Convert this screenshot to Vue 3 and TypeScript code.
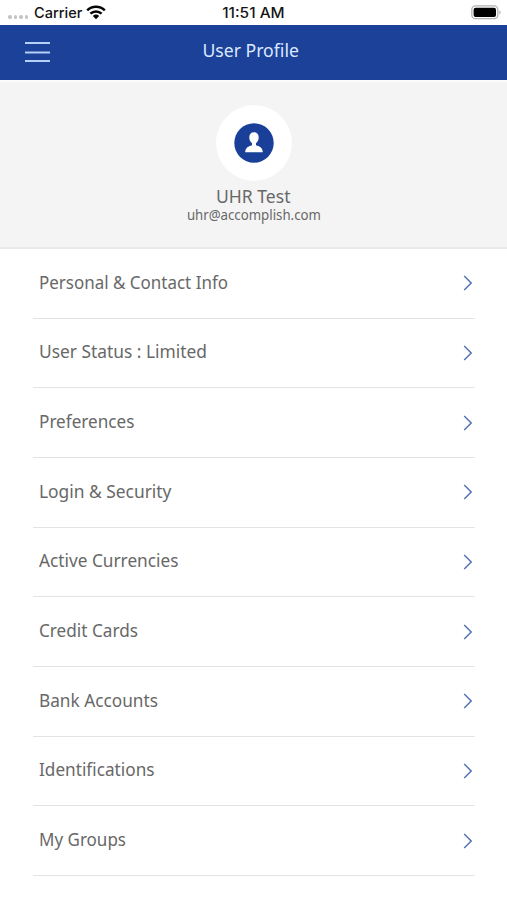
<script setup lang="ts">
import { nextTick, onMounted, ref } from 'vue'

interface MenuItem {
  label: string
  width: number
}

const items: MenuItem[] = [
  { label: 'Personal & Contact Info', width: 189 },
  { label: 'User Status : Limited', width: 168 },
  { label: 'Preferences', width: 95.5 },
  { label: 'Login & Security', width: 132.5 },
  { label: 'Active Currencies', width: 139.5 },
  { label: 'Credit Cards', width: 99 },
  { label: 'Bank Accounts', width: 119 },
  { label: 'Identifications', width: 115.5 },
  { label: 'My Groups', width: 87 },
]

const page = ref<HTMLElement | null>(null)

// Condense each label horizontally to its designed width.
function fitLabels(): void {
  page.value?.querySelectorAll<HTMLElement>('[data-fit]').forEach((el) => {
    const target = Number(el.dataset.fit)
    el.style.transform = `scaleX(${target / el.getBoundingClientRect().width})`
  })
}

onMounted(async () => {
  await nextTick()
  fitLabels()
})
</script>

<template>
  <main ref="page" class="page">
    <div class="status">
      <div class="carrier">
        <span class="dots"><i v-for="n in 4" :key="n"></i></span>
        <span class="fit left" data-fit="48.5">Carrier</span>
        <svg class="wifi" width="20" height="15" viewBox="0 0 20 15">
          <g fill="none" stroke="#050505" stroke-width="2.5">
            <path d="M1.2 5.3C6 .6 14 .6 18.8 5.3" />
            <path d="M4.4 8.7C7.6 5.6 12.4 5.6 15.6 8.7" />
          </g>
          <path fill="#050505" d="M6.8 10.9Q10 8.3 13.2 10.9L10 14.2Z" />
        </svg>
      </div>
      <div class="clock"><span class="fit" data-fit="62.5">11:51 AM</span></div>
      <svg class="battery" width="31" height="15" viewBox="0 0 31 15">
        <rect x=".8" y=".9" width="26" height="12.8" rx="3.6" fill="#fff" stroke="#b3b3b3" stroke-width="1.3" />
        <rect x="2.6" y="2.7" width="22.4" height="9.2" rx="2" fill="#000" />
        <path d="M28.5 5.2Q30.7 7.3 28.5 9.4Z" fill="#999" />
      </svg>
    </div>
    <header class="bar">
      <svg class="burger" width="25" height="22" viewBox="0 0 25 22" stroke="#b4d0f6" stroke-width="2">
        <path d="M0 2H25M0 11.4H25M0 20H25" />
      </svg>
      <h1><span class="fit" data-fit="96.5">User Profile</span></h1>
    </header>
    <section class="profile">
      <div class="avatar">
        <svg width="40" height="40" viewBox="0 0 40 40">
          <circle cx="20" cy="20" r="19.7" fill="#193f99" />
          <path fill="#fff" d="M20 9.2C17 9.2 15.3 11.2 15.3 14.3C15.3 17 16.3 19 18 20.2V22.2C14.5 23.3 11.5 24.2 11.2 29.3H28.8C28.5 24.2 25.5 23.3 22 22.2V20.2C23.7 19 24.7 17 24.7 14.3C24.7 11.2 23 9.2 20 9.2Z" />
        </svg>
      </div>
      <div class="name"><span class="fit" data-fit="74.5">UHR Test</span></div>
      <div class="email"><span class="fit" data-fit="134">uhr@accomplish.com</span></div>
    </section>
    <ul class="menu">
      <li v-for="item in items" :key="item.label">
        <span class="fit left" :data-fit="item.width">{{ item.label }}</span>
        <svg width="10" height="16" viewBox="0 0 10 16" fill="none" stroke="#5272b6" stroke-width="1.5">
          <path d="M1.2 1L8.2 8L1.2 15" />
        </svg>
      </li>
    </ul>
  </main>
</template>

<style>
body {
  background: #fff;
}
</style>

<style scoped>
.page {
  height: 900px;
  overflow: hidden;
  background: #fff;
  color: #686868;
  font-family: 'Noto Sans', 'Open Sans', sans-serif;
}
.fit {
  display: inline-block;
  white-space: nowrap;
  transform-origin: center;
}
.left {
  transform-origin: left center;
}
.status {
  height: 25.4px;
  box-sizing: border-box;
  display: grid;
  grid-template-columns: 1fr auto 1fr;
  align-items: center;
  padding: 0 6px 0 8px;
  color: #151515;
  font: 500 14px/25px Inter, sans-serif;
}
.carrier {
  display: flex;
  align-items: center;
}
.dots {
  display: flex;
  gap: 2px;
  width: 26px;
  padding-top: 9px;
}
.dots i {
  width: 3.5px;
  height: 3.5px;
  border-radius: 50%;
  background: #c4c4c4;
}
.wifi {
  margin-left: 5px;
}
.clock {
  margin-right: 2px;
  text-align: center;
}
.battery {
  justify-self: end;
  margin-right: -1px;
}
.bar {
  height: 55px;
  box-sizing: border-box;
  display: grid;
  grid-template-columns: 1fr auto 1fr;
  align-items: center;
  padding: 0 30px 2px 25px;
  background: #1b4198;
  color: #dce8ff;
}
.bar h1 {
  margin: 0;
  padding-bottom: 3.5px;
  font-size: 18.5px;
  font-weight: 400;
  line-height: 26px;
}
.profile {
  height: 168.6px;
  box-sizing: border-box;
  display: flex;
  flex-direction: column;
  align-items: center;
  padding-top: 22.6px;
  background: #f4f4f4;
  border-top: 2px solid #fbfbfb;
  border-bottom: 2px solid #e9e9e9;
}
.avatar {
  width: 76px;
  height: 76px;
  display: grid;
  place-items: center;
  border-radius: 50%;
  background: #fff;
}
.name {
  margin-top: 5px;
  font-size: 18.5px;
  line-height: 20px;
}
.email {
  font-size: 14px;
  line-height: 18px;
}
.menu {
  margin: 0 32px 0 33px;
  padding: 0;
  list-style: none;
}
.menu li {
  height: 69.66px;
  box-sizing: border-box;
  display: flex;
  align-items: center;
  justify-content: space-between;
  padding: 0 2px 0 6px;
  border-bottom: 1px solid #e3e3e3;
  font-size: 18.5px;
}
.menu .fit {
  padding-bottom: 4.5px;
}
</style>
